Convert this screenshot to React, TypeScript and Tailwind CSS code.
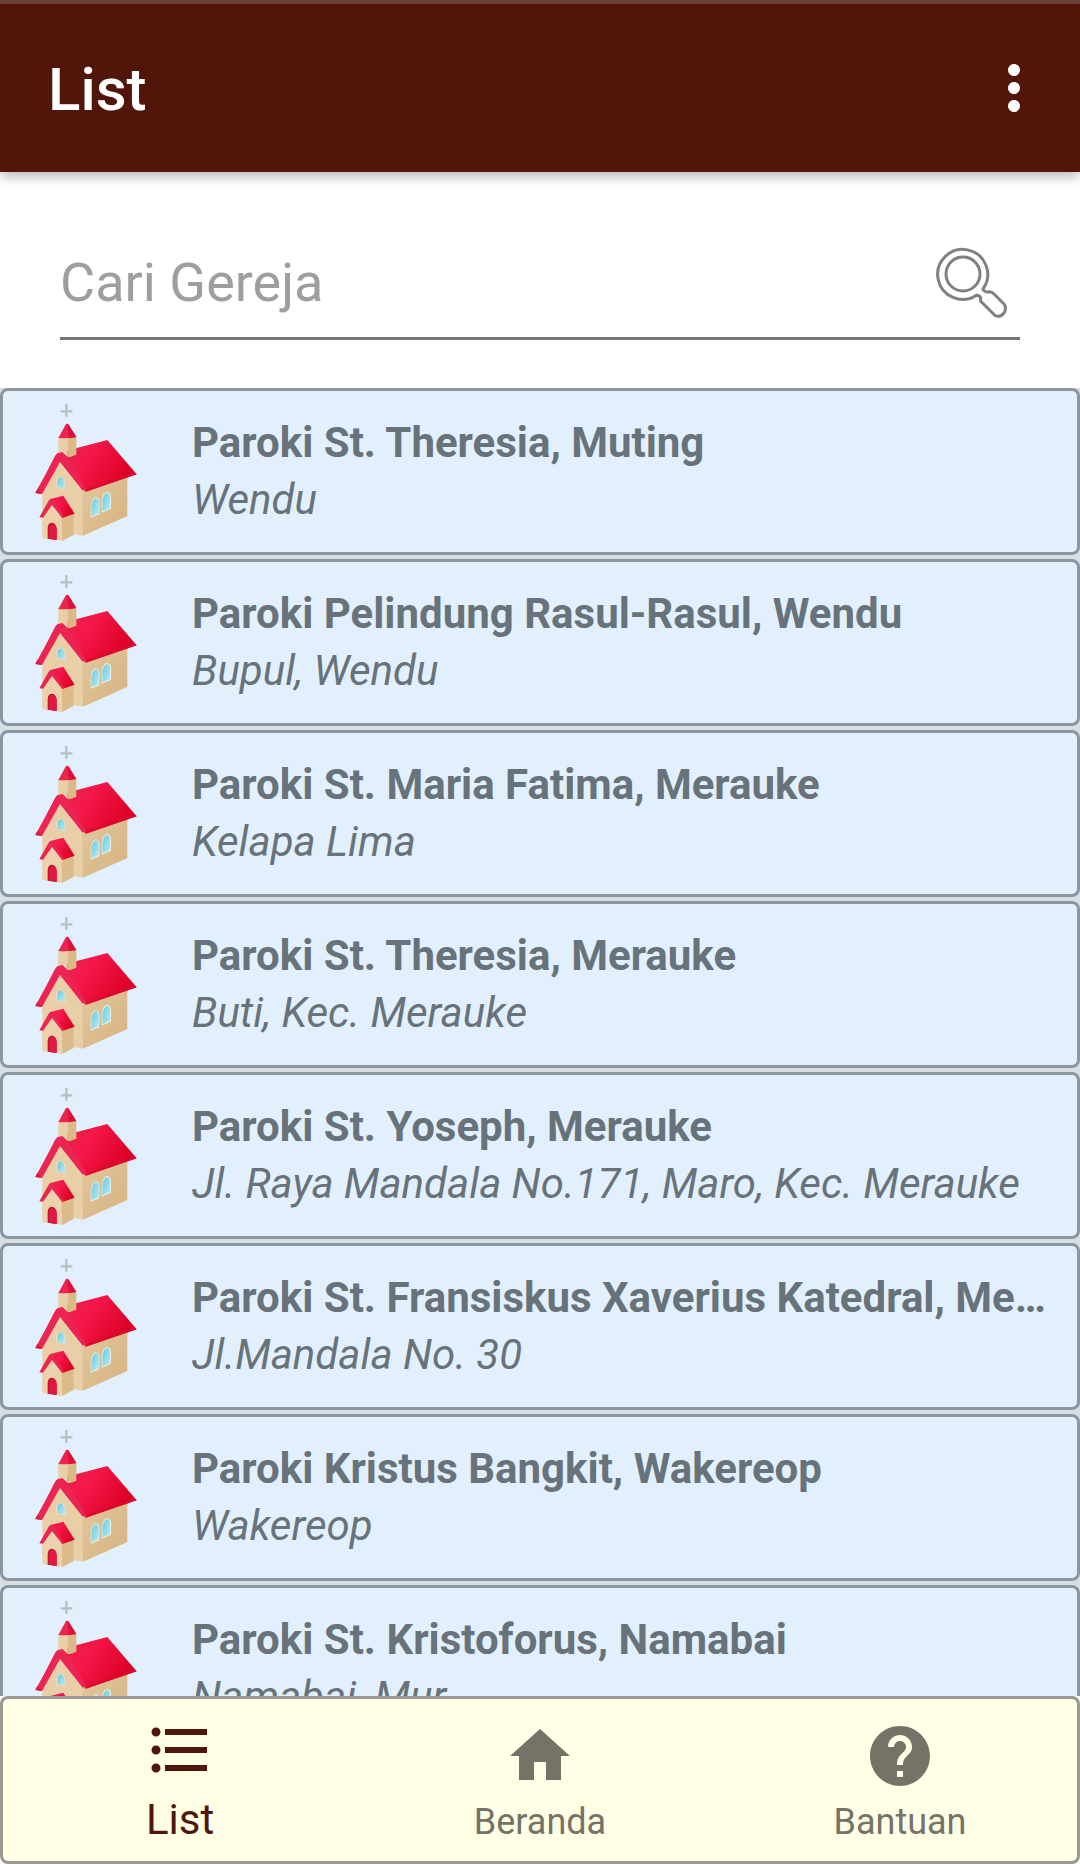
import React from 'react';
import { MdFormatListBulleted, MdHelp, MdHome, MdMoreVert } from 'react-icons/md';

interface Church {
  name: string;
  address: string;
}

const churches: Church[] = [
  { name: 'Paroki St. Theresia, Muting', address: 'Wendu' },
  { name: 'Paroki Pelindung Rasul-Rasul, Wendu', address: 'Bupul, Wendu' },
  { name: 'Paroki St. Maria Fatima, Merauke', address: 'Kelapa Lima' },
  { name: 'Paroki St. Theresia, Merauke', address: 'Buti, Kec. Merauke' },
  { name: 'Paroki St. Yoseph, Merauke', address: 'Jl. Raya Mandala No.171, Maro, Kec. Merauke' },
  { name: 'Paroki St. Fransiskus Xaverius Katedral, Merauke', address: 'Jl.Mandala No. 30' },
  { name: 'Paroki Kristus Bangkit, Wakereop', address: 'Wakereop' },
  { name: 'Paroki St. Kristoforus, Namabai', address: 'Namabai, Mur' },
];

const ChurchIcon: React.FC = () => (
  <svg viewBox="100 66 324 420" className="h-[140px] w-[108px] shrink-0" aria-hidden="true">
    <defs>
      <linearGradient id="roof" x1="0" y1="0" x2="1" y2="0.4">
        <stop offset="0" stopColor="#e2264f" />
        <stop offset="0.45" stopColor="#f5174a" />
        <stop offset="1" stopColor="#dc0024" />
      </linearGradient>
      <linearGradient id="wall" x1="0" y1="0" x2="1" y2="1">
        <stop offset="0" stopColor="#e2c79c" />
        <stop offset="1" stopColor="#d6b280" />
      </linearGradient>
      <linearGradient id="glass" x1="0" y1="0" x2="1" y2="1">
        <stop offset="0" stopColor="#6ccbe0" />
        <stop offset="1" stopColor="#b4eaf4" />
      </linearGradient>
    </defs>
    {/* Salib */}
    <path d="M200 72V110M183 94H218" stroke="#b9bec0" strokeWidth="7" fill="none" />
    {/* Dinding */}
    <path d="M127 320L182 246L250 332V467L222 462L190 482L130 474Z" fill="#e9cfa7" />
    <path d="M248 330L383 288V408L250 467Z" fill="url(#wall)" />
    {/* Atap utama */}
    <path d="M177 218L323 180L411 283L258 335L196 240Z" fill="url(#roof)" />
    <path d="M107 339Q140 280 166 228Q174 214 188 216L202 226L262 332L248 331L181 246L127 342Z" fill="#ec2453" />
    <path d="M107 339L113 326L127 342Z" fill="#d51d45" />
    <path d="M258 335L411 283L402 277L262 326Z" fill="#d90a30" />
    {/* Menara */}
    <path d="M176 170H204V231L188 216L176 219Z" fill="#e9cfa7" />
    <path d="M204 172L230 170V224L212 231L204 231Z" fill="#dbb988" />
    <path d="M199 132Q203 129 207 134L230 171Q204 177 176 174Z" fill="#ee2450" />
    <path d="M203 131L207 134L230 171L208 174Z" fill="#d8123a" />
    {/* Jendela */}
    <path d="M170 322V302Q173 290 184 290Q196 294 197 310V328Z" fill="#f2e3c8" />
    <path d="M173 321V304Q175 292 185 292Q194 297 195 311V326Z" fill="url(#glass)" />
    <path d="M273 413V377Q276 356 288 352Q299 353 299 367V403Z" fill="#e8f0e4" />
    <path d="M275 409V377Q279 358 288 355Q297 356 297 367V400Z" fill="url(#glass)" />
    <path d="M306 398V360Q309 341 321 336Q334 337 334 350V386Z" fill="#e8f0e4" />
    <path d="M308 394V360Q312 343 321 339Q331 340 331 350V384Z" fill="url(#glass)" />
    {/* Serambi depan */}
    <path d="M127 406L156 374L188 412V482L128 474Z" fill="#ebd2ac" />
    <path d="M186 408L222 396V465L188 482Z" fill="#dcbb8b" />
    <path d="M152 357L191 347L225 401L188 414L160 372Z" fill="url(#roof)" />
    <path d="M119 412L146 364Q150 355 158 357L194 412H186L157 375L130 413Z" fill="#ec2451" />
    <path d="M144 476V443Q146 427 158 428Q170 431 171 446V480Z" fill="#be1637" />
    <path d="M148 476V445Q150 432 160 432Q170 435 171 447V480Z" fill="#e3173f" />
  </svg>
);

const SearchIcon: React.FC = () => (
  <svg viewBox="0 0 72 72" className="size-[72px]" fill="none" stroke="#808080" strokeWidth="3" strokeLinejoin="round" aria-hidden="true">
    <circle cx="27" cy="27" r="17" />
    <path d="M40.500 48.200A25 25 0 1 1 47.500 41.200Q46 42.500 49 44.200Q51 45.500 54 44.800Q56 45 58 47L68 57Q71 61 68 66Q64 71 59 68.500L46 55.500Q43.500 53 44.800 51Q43.500 48 40.500 48.200Z" />
  </svg>
);

const ChurchRow: React.FC<Church> = ({ name, address }) => (
  <li className="flex h-[167px] shrink-0 items-start rounded-lg border-3 border-[#8b979f] bg-[#e2f0fd] pt-[11px] pr-7 pl-[30px]">
    <ChurchIcon />
    <div className="ml-[51px] min-w-0 flex-1 pt-3 text-[42px] leading-[57px] text-[#68727a]">
      <h2 className="truncate font-bold">{name}</h2>
      <p className="truncate italic">{address}</p>
    </div>
  </li>
);

const App: React.FC = () => {
  return (
    <div className="flex h-screen flex-col bg-white font-['Roboto',sans-serif]">
      <header className="z-10 flex h-[172px] shrink-0 items-center justify-between border-t-4 border-[#6b4039] bg-[#511509] pr-[30px] pl-12 shadow-[0_4px_12px_rgba(0,0,0,0.3)]">
        <h1 className="pt-1 text-[60px] leading-[72px] font-medium text-white">List</h1>
        <button type="button" aria-label="Menu" className="text-white">
          <MdMoreVert className="size-[72px]" />
        </button>
      </header>

      <form className="mx-[60px] mt-12 mb-12 flex h-[120px] shrink-0 items-center border-b-3 border-[#757575] pt-2">
        <input
          type="text"
          aria-label="Cari Gereja"
          placeholder="Cari Gereja"
          className="h-full min-w-0 flex-1 text-[54px] text-gray-700 outline-none placeholder:text-[#9e9e9e]"
        />
        <button type="button" aria-label="Cari" className="mr-3">
          <SearchIcon />
        </button>
      </form>

      <ul className="flex min-h-0 flex-1 flex-col gap-1 overflow-y-auto bg-[#d8dfe4] [scrollbar-width:none]">
        {churches.map((church) => (
          <ChurchRow key={church.name} {...church} />
        ))}
      </ul>

      <nav className="grid h-[168px] shrink-0 grid-cols-3 rounded-lg bg-[#ffffe6] text-[#757267] ring-3 ring-[#9a9991] ring-inset">
        <a href="#list" className="flex flex-col items-center pt-[18px] text-[#4f170b]">
          <MdFormatListBulleted className="size-[72px]" />
          <span className="mt-1.5 text-[42px] leading-[56px]">List</span>
        </a>
        <a href="#beranda" className="flex flex-col items-center pt-6">
          <MdHome className="size-[72px]" />
          <span className="mt-0.5 text-[36px] leading-[56px]">Beranda</span>
        </a>
        <a href="#bantuan" className="flex flex-col items-center pt-6">
          <MdHelp className="size-[72px]" />
          <span className="mt-0.5 text-[36px] leading-[56px]">Bantuan</span>
        </a>
      </nav>
    </div>
  );
};

export default App;
